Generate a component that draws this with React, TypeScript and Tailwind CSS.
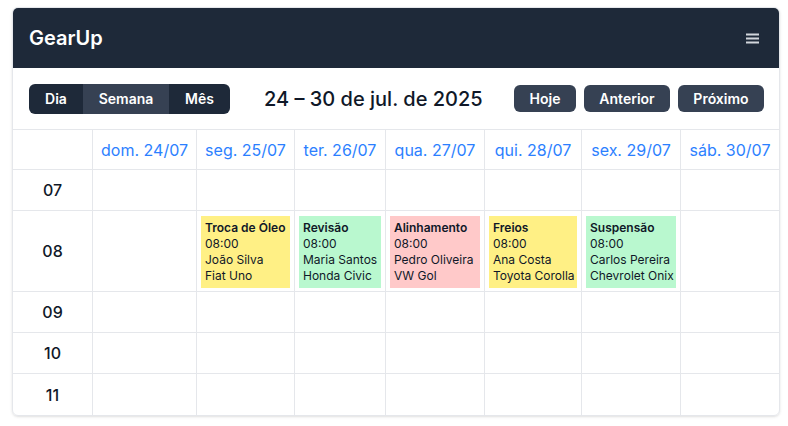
const days = [
  "dom. 24/07",
  "seg. 25/07",
  "ter. 26/07",
  "qua. 27/07",
  "qui. 28/07",
  "sex. 29/07",
  "sáb. 30/07",
];

const hours = ["07", "08", "09", "10", "11"];

type Appt = { title: string; time: string; client: string; car: string; color: string };

// indexed by day column
const appts: Record<number, Appt> = {
  1: { title: "Troca de Óleo", time: "08:00", client: "João Silva", car: "Fiat Uno", color: "bg-yellow-200" },
  2: { title: "Revisão", time: "08:00", client: "Maria Santos", car: "Honda Civic", color: "bg-green-200" },
  3: { title: "Alinhamento", time: "08:00", client: "Pedro Oliveira", car: "VW Gol", color: "bg-red-200" },
  4: { title: "Freios", time: "08:00", client: "Ana Costa", car: "Toyota Corolla", color: "bg-yellow-200" },
  5: { title: "Suspensão", time: "08:00", client: "Carlos Pereira", car: "Chevrolet Onix", color: "bg-green-200" },
};

export default function App() {
  return (
    <div className="min-h-screen bg-white pl-3 pr-2 pt-[7px] font-['Inter',sans-serif] text-gray-900">
      <div className="overflow-hidden rounded-md border border-gray-200 shadow-sm">
        <header className="flex h-[60px] items-center justify-between bg-gray-800 pl-4 pr-5">
          <span className="text-xl font-semibold text-white">GearUp</span>
          <svg width="13" height="11" viewBox="0 0 13 11" className="text-gray-300">
            <rect x="0" y="0.5" width="13" height="2" fill="currentColor" />
            <rect x="0" y="4.5" width="13" height="2" fill="currentColor" />
            <rect x="0" y="8.5" width="13" height="2" fill="currentColor" />
          </svg>
        </header>

        <div className="flex h-[62px] items-center border-b border-gray-200 pl-4 pr-[15px]">
          <div className="flex h-[30px] overflow-hidden rounded-md bg-gray-800 text-sm font-semibold text-white">
            <button className="w-[54px]">Dia</button>
            <button className="w-[86px] bg-gray-700">Semana</button>
            <button className="w-[61px]">Mês</button>
          </div>
          <h2 className="ml-[34px] text-xl font-medium">24 – 30 de jul. de 2025</h2>
          <div className="ml-auto flex gap-2 text-sm font-semibold text-white">
            <button className="h-[27px] w-[62px] rounded-md bg-gray-700">Hoje</button>
            <button className="h-[27px] w-[86px] rounded-md bg-gray-700">Anterior</button>
            <button className="h-[27px] w-[86px] rounded-md bg-gray-700">Próximo</button>
          </div>
        </div>

        <div className="grid grid-cols-[80px_104px_98px_91px_99px_97px_99px_1fr]">
          <div className="h-10 border-b border-r border-gray-200" />
          {days.map((d, i) => (
            <div
              key={d}
              className={`flex h-10 items-center justify-center border-b border-gray-200 text-base text-blue-500 ${i < 6 ? "border-r" : ""}`}
            >
              {d}
            </div>
          ))}

          {hours.map((h, r) => {
            const big = h === "08";
            const last = r === hours.length - 1;
            return [
              <div
                key={h}
                className={`flex items-center justify-center border-r border-gray-200 text-base font-medium ${big ? "h-[81px]" : "h-[41px]"} ${last ? "" : "border-b"}`}
              >
                {h}
              </div>,
              ...days.map((d, i) => {
                const a = big ? appts[i] : undefined;
                return (
                  <div
                    key={h + d}
                    className={`border-gray-200 ${big ? "h-[81px] px-[4px] pt-[5px]" : "h-[41px]"} ${last ? "" : "border-b"} ${i < 6 ? "border-r" : ""}`}
                  >
                    {a && (
                      <div className={`h-[72px] ${a.color} px-1 pt-[4px] text-xs leading-4 text-gray-900`}>
                        <div className="font-semibold">{a.title}</div>
                        <div>{a.time}</div>
                        <div className="whitespace-nowrap">{a.client}</div>
                        <div className="whitespace-nowrap">{a.car}</div>
                      </div>
                    )}
                  </div>
                );
              }),
            ];
          })}
        </div>
      </div>
    </div>
  );
}
